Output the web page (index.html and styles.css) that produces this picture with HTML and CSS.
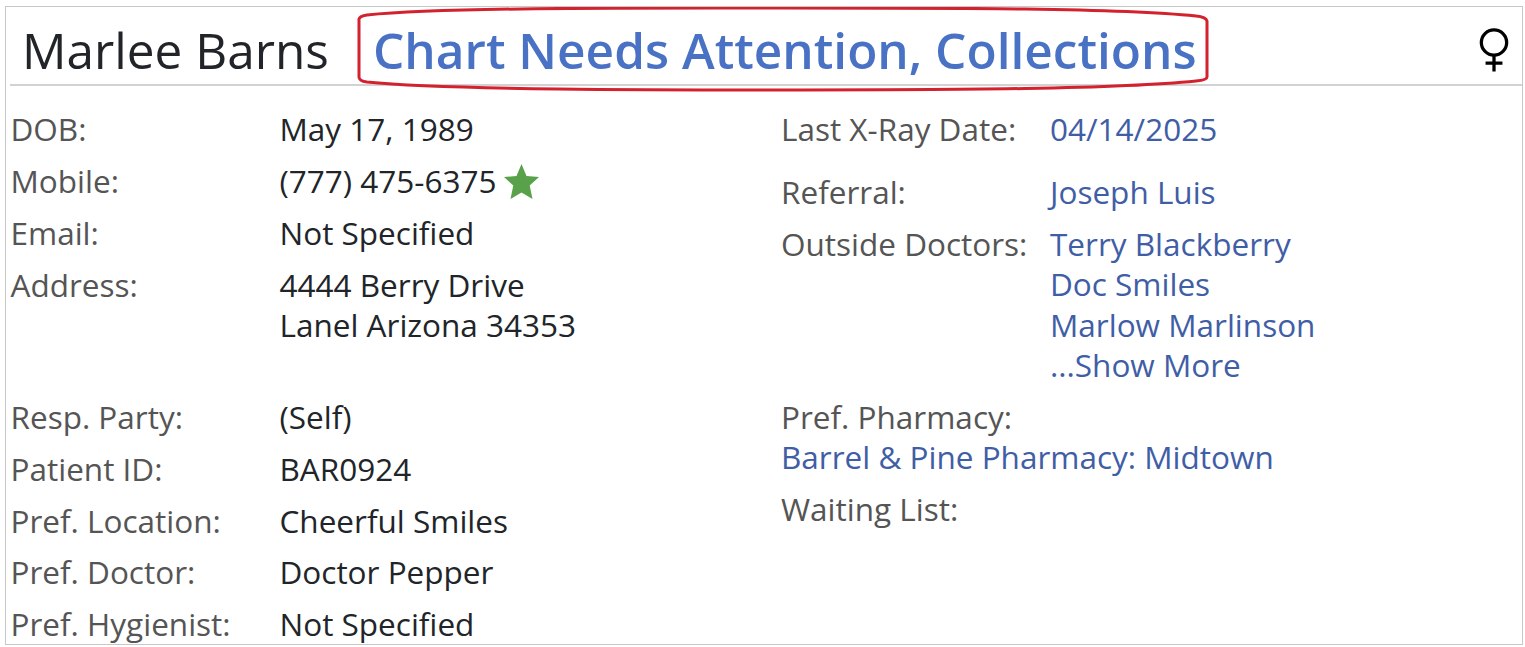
FILE: index.html
```html
<!DOCTYPE html>
<html lang="en">
<head>
<meta charset="utf-8">
<title>Marlee Barns</title>
<link rel="stylesheet" href="styles.css">
</head>
<body>
<main class="card">
  <header class="head">
    <h1 class="name">Marlee Barns</h1>
    <div class="alert">Chart Needs Attention, Collections
      <svg class="oval" viewBox="0 0 852 84" preserveAspectRatio="none" aria-hidden="true">
        <path d="M2 12 Q3 9 10 8 C90 0 300 1 426 1 C600 1 760 1 839 9 Q849 10 850 14 L850 70 Q850 73 839 74 C760 82 600 83 426 83 C300 83 90 83 10 75 Q2 74 2 70 Z"/>
      </svg>
    </div>
    <svg class="gender" viewBox="0 0 32 46" aria-hidden="true">
      <circle cx="16" cy="15" r="13.5"/>
      <path d="M16 29 V46 M7 37 H25"/>
    </svg>
  </header>
  <div class="columns">
    <section class="col col-left">
      <div class="row"><span class="label">DOB:</span><span class="value">May 17, 1989</span></div>
      <div class="row"><span class="label">Mobile:</span><span class="value">(777) 475-6375
        <svg class="star" viewBox="0 0 35 35" aria-hidden="true"><path d="M17.5 0 L22.5 12 L35 13 L25.7 21.5 L28.5 35 L17.5 28.5 L6.5 35 L9.3 21.5 L0 13 L12.5 12 Z"/></svg></span></div>
      <div class="row"><span class="label">Email:</span><span class="value">Not Specified</span></div>
      <div class="row"><span class="label">Address:</span><span class="value">4444 Berry Drive<br>Lanel Arizona 34353<br>&nbsp;</span></div>
      <div class="row"><span class="label">Resp. Party:</span><span class="value">(Self)</span></div>
      <div class="row"><span class="label">Patient ID:</span><span class="value">BAR0924</span></div>
      <div class="row"><span class="label">Pref. Location:</span><span class="value">Cheerful Smiles</span></div>
      <div class="row"><span class="label">Pref. Doctor:</span><span class="value">Doctor Pepper</span></div>
      <div class="row"><span class="label">Pref. Hygienist:</span><span class="value">Not Specified</span></div>
    </section>
    <section class="col col-right">
      <div class="row row-xray"><span class="label">Last X-Ray Date:</span><span class="value link">04/14/2025</span></div>
      <div class="row"><span class="label">Referral:</span><span class="value link">Joseph Luis</span></div>
      <div class="row"><span class="label">Outside Doctors:</span><span class="value link">Terry Blackberry<br>Doc Smiles<br>Marlow Marlinson<br>...Show More</span></div>
      <div class="row stack"><span class="label">Pref. Pharmacy:</span><span class="link">Barrel &amp; Pine Pharmacy: Midtown</span></div>
      <div class="row"><span class="label">Waiting List:</span><span class="value"></span></div>
    </section>
  </div>
</main>
</body>
</html>
```
FILE: styles.css
```css
* { box-sizing: border-box; }
html, body { margin: 0; height: 100%; background: #fff; overflow: hidden; }
body { padding: 6px 2px 2px 5px; font-family: "Open Sans", "Noto Sans", sans-serif; color: #212529; }
.card { height: 639px; border: 1px solid #c8c8c8; overflow: hidden; }
.head { display: flex; align-items: center; height: 79px; margin-left: 4px; margin-right: -4px; border-bottom: 2px solid #d2d2d2; padding: 8px 17px 0 12px; }
.name { margin: 0; font-size: 49.5px; font-weight: 400; line-height: 76px; width: 351px; flex: none; }
.alert { position: relative; font-size: 49.5px; font-weight: 600; line-height: 76px; color: #4a72c4; white-space: nowrap; }
.oval { position: absolute; left: -16px; top: -5px; width: 852px; height: 84px; overflow: visible; }
.oval path { fill: none; stroke: #d3222e; stroke-width: 3; }
.gender { margin-left: auto; width: 30px; height: 46px; }
.gender circle, .gender path { fill: none; stroke: #000; stroke-width: 3.5; }
.columns { display: grid; grid-template-columns: 770.5px 1fr; padding: 23px 0 0 4.5px; font-size: 31.5px; }
.col { min-width: 0; }
.col-left { line-height: 40.3px; margin-top: 0.3px; }
.col-right { line-height: 40.4px; }
.row { display: flex; padding-bottom: 11.5px; }
.col-right .row-xray { padding-bottom: 22.5px; }
.stack { display: block; }
.stack .label, .stack .link { display: block; width: auto; }
.label { flex: none; width: 269px; color: #555; }
.value { white-space: nowrap; }
.link { color: #3f5ea6; }
.star { width: 35px; height: 35px; margin: -8px 0 -8px -1px; vertical-align: 2px; fill: #59a14a; }
```
